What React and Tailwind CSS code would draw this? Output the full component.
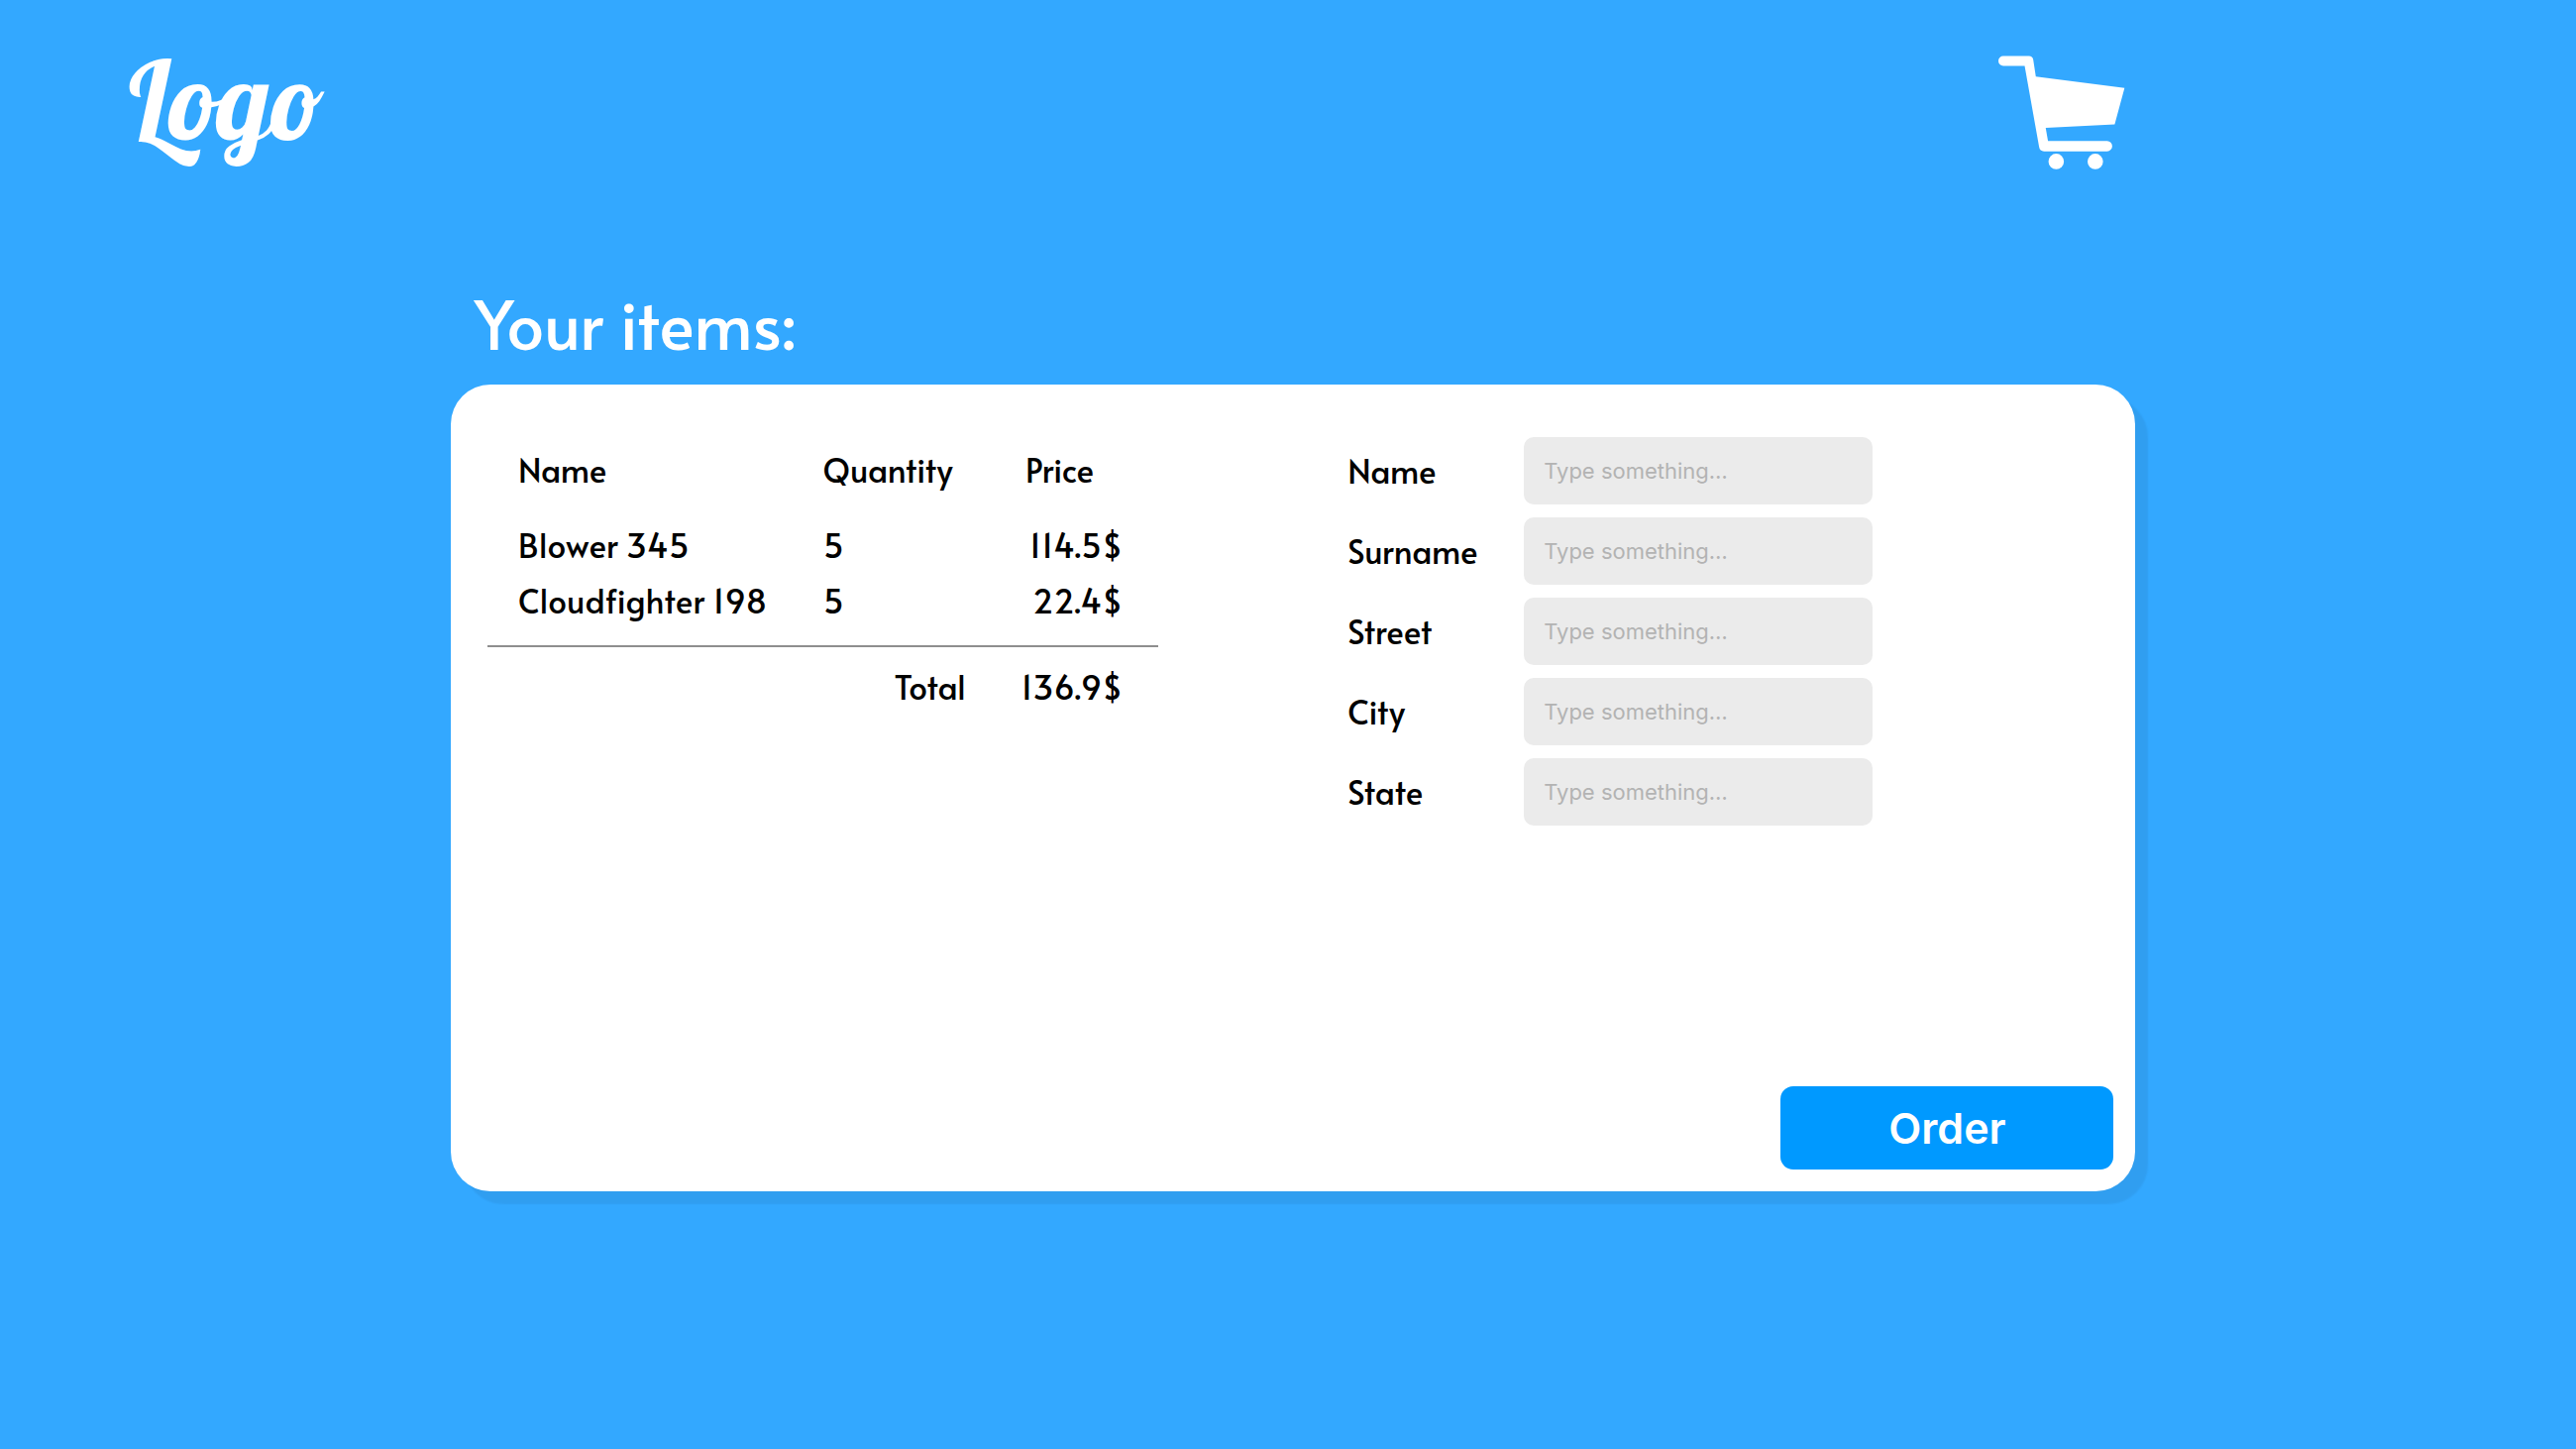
const items = [
  { name: "Blower 345", quantity: 5, price: "114.5$" },
  { name: "Cloudfighter 198", quantity: 5, price: "22.4$" },
];

const fields = ["Name", "Surname", "Street", "City", "State"];

function CartIcon() {
  return (
    <svg viewBox="80 47 386 346" className="h-[115px] w-32" fill="currentColor" aria-hidden="true">
      <path d="M95 48H173Q184 48 186 59L194 111L464 145L434 256L224 267L231 307H411A15.5 15.5 0 0 1 411 338H219Q206 338 204 325L160 78H95A15 15 0 0 1 95 48Z" />
      <circle cx="256" cy="369" r="23.5" />
      <circle cx="375" cy="369" r="23.5" />
    </svg>
  );
}

function Header() {
  return (
    <header className="flex h-[228px] items-start justify-between pt-14 pr-[17.5%] pl-[5%]">
      <a href="#home" className="font-['Lobster','Liberation_Serif',serif] text-[109px] leading-[88px] font-normal">
        Logo
      </a>
      <button type="button" aria-label="Shopping cart">
        <CartIcon />
      </button>
    </header>
  );
}

function ItemsTable() {
  return (
    <table className="w-[78%] table-fixed self-start text-left">
      <thead>
        <tr>
          <th className="h-[81px] w-[50%] pb-4 pl-[31px] font-normal">Name</th>
          <th className="w-[29%] pb-4 font-normal">Quantity</th>
          <th className="w-[21%] pb-4 pl-2 font-normal">Price</th>
        </tr>
      </thead>
      <tbody>
        {items.map((item) => (
          <tr key={item.name} className="h-14 [font-kerning:none]">
            <td className="pl-[31px] whitespace-nowrap">{item.name}</td>
            <td>{item.quantity}</td>
            <td className="pr-9 text-right">{item.price}</td>
          </tr>
        ))}
        <tr className="h-[18px]" />
      </tbody>
      <tfoot className="border-t-2 border-[#8e8e8e]">
        <tr className="h-[81px]">
          <th colSpan={2} className="pr-[52px] text-right font-normal">Total</th>
          <td className="pr-9 text-right [font-kerning:none]">136.9$</td>
        </tr>
      </tfoot>
    </table>
  );
}

function Field({ label }) {
  const id = label.toLowerCase();
  return (
    <div className="flex items-center">
      <label htmlFor={id} className="w-[178px]">{label}</label>
      <input
        id={id}
        type="text"
        placeholder="Type something…"
        className="h-[68px] w-[352px] rounded-[10px] bg-[#ebebeb] px-5 font-['Inter',sans-serif] text-[22px] placeholder:text-[#b3b3b3]"
      />
    </div>
  );
}

export default function App() {
  return (
    <div className="min-h-screen bg-[#33a8ff] font-['Alata','Lato',sans-serif] text-white">
      <Header />
      <main className="ml-[17.5%] w-[65.4%] pb-20">
        <h1 className="pt-14 pb-5 pl-6 text-[67px] leading-[84px] font-normal">Your items:</h1>
        <form className="flex min-h-[814px] flex-col justify-between rounded-[40px] bg-white pt-[53px] pr-[22px] pb-[22px] pl-[37px] text-[33px] leading-10 text-black shadow-[13px_13px_2px_rgba(0,0,0,0.06)]">
          <div className="grid grid-cols-[868fr_773fr]">
            <ItemsTable />
            <div className="flex flex-col gap-[13px]">
              {fields.map((label) => (
                <Field key={label} label={label} />
              ))}
            </div>
          </div>
          <button
            type="button"
            className="h-[84px] w-[336px] self-end rounded-[13px] bg-[#0099ff] font-['Inter',sans-serif] text-[43px] font-semibold text-white"
          >
            Order
          </button>
        </form>
      </main>
    </div>
  );
}
